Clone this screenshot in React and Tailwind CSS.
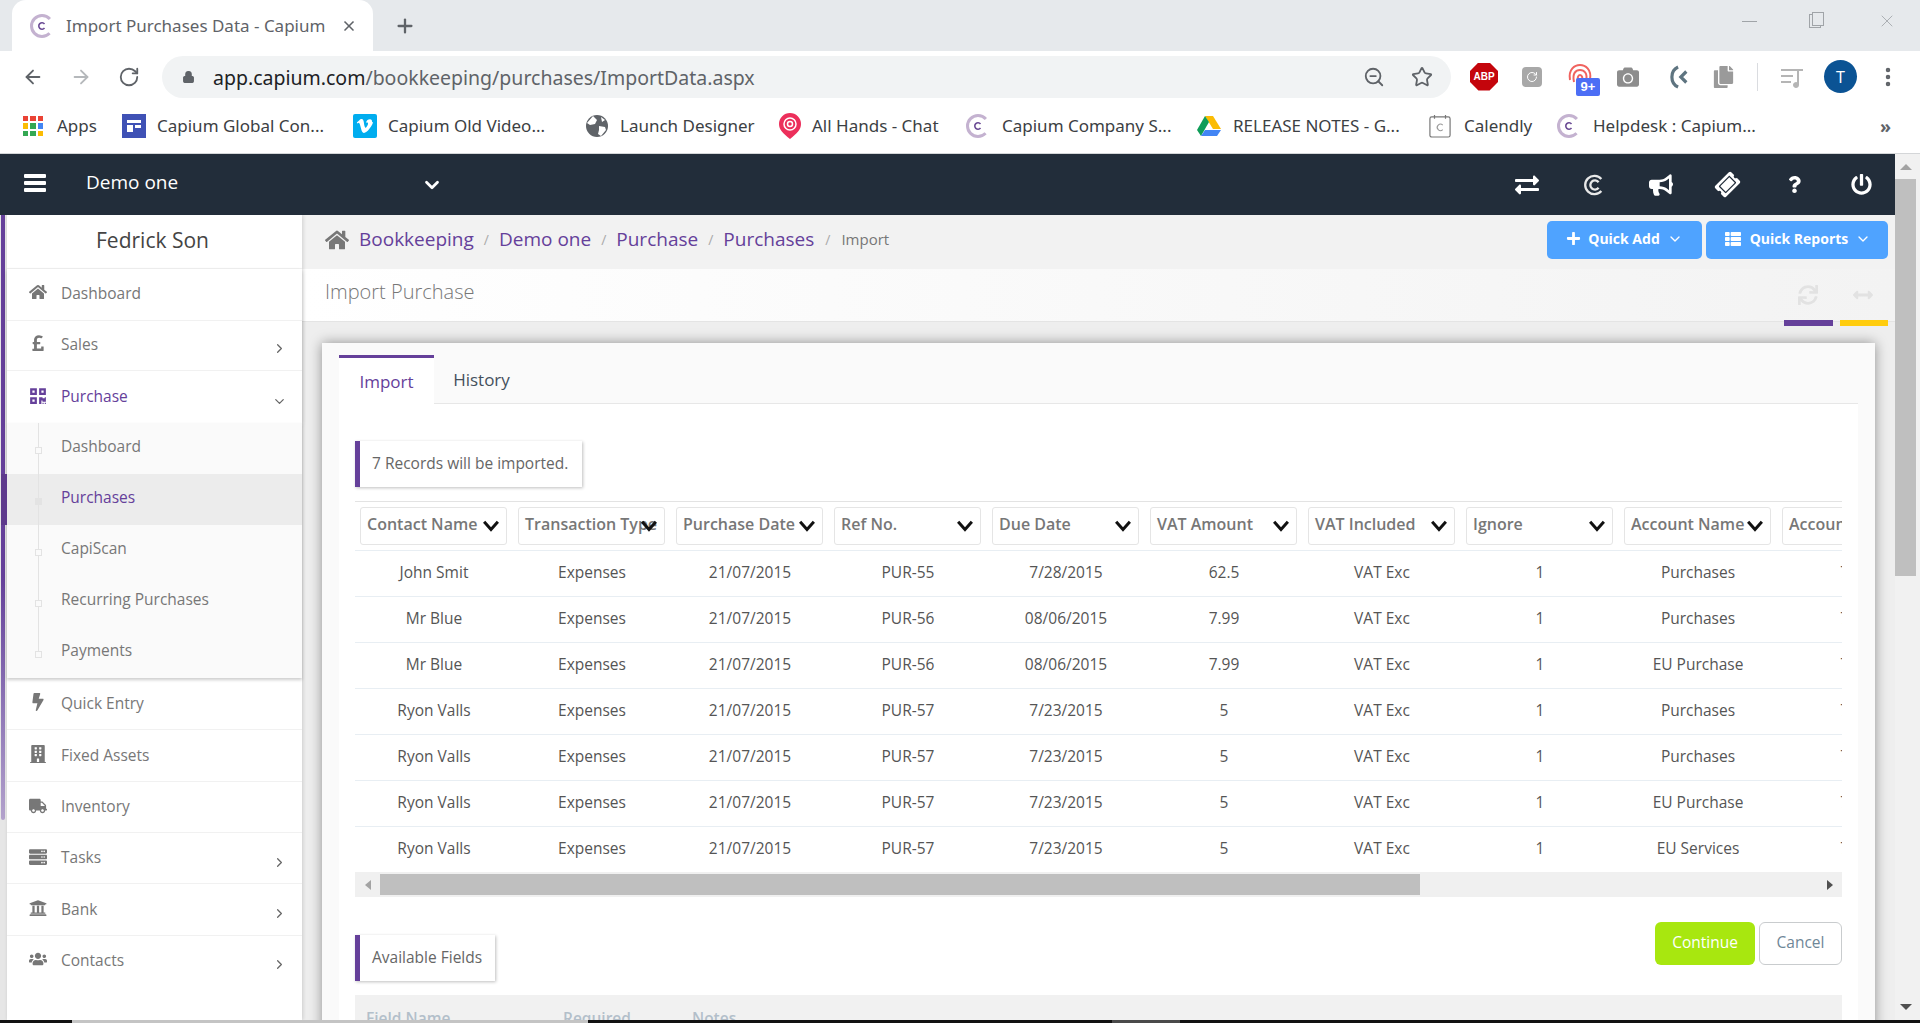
import {
  ArrowLeft,
  ArrowRight,
  RotateCw,
  Lock,
  ZoomOut,
  Star,
  MoreVertical,
  X,
  Plus,
  ChevronDown,
  ChevronRight,
} from 'lucide-react';
import {
  FaHome,
  FaPoundSign,
  FaQrcode,
  FaBolt,
  FaBuilding,
  FaTruck,
  FaServer,
  FaUniversity,
  FaUsers,
  FaExchangeAlt,
  FaBullhorn,
  FaTicketAlt,
  FaQuestion,
  FaPowerOff,
  FaPlus,
  FaThList,
  FaSync,
  FaArrowsAltH,
  FaCamera,
  FaCopy,
} from 'react-icons/fa';

const CapiumLogo = ({ className = 'w-6 h-6' }) => (
  <svg viewBox="0 0 24 24" className={className} fill="none">
    <circle cx="12" cy="12" r="10.5" stroke="#c4b2d0" strokeWidth="3" strokeDasharray="50 16" strokeDashoffset="-8" />
    <circle cx="12" cy="12" r="7.5" fill="#fff" />
    <path d="M14.5 10a3.2 3.2 0 1 0 0 4" stroke="#6a4a94" strokeWidth="1.6" />
  </svg>
);

const bookmarks = [
  { label: 'Apps', w: 'w-[99px]', icon: 'apps' },
  { label: 'Capium Global Con...', w: 'w-[231px]', icon: 'table' },
  { label: 'Capium Old Video...', w: 'w-[232px]', icon: 'vimeo' },
  { label: 'Launch Designer', w: 'w-[193px]', icon: 'globe' },
  { label: 'All Hands - Chat', w: 'w-[188px]', icon: 'chat' },
  { label: 'Capium Company S...', w: 'w-[231px]', icon: 'capium' },
  { label: 'RELEASE NOTES - G...', w: 'w-[232px]', icon: 'drive' },
  { label: 'Calendly', w: 'w-[128px]', icon: 'calendly' },
  { label: 'Helpdesk : Capium...', w: 'w-[300px]', icon: 'capium' },
];

const BookmarkIcon = ({ type }) => {
  if (type === 'apps') {
    const colors = ['#ea4335', '#ea4335', '#ea4335', '#fbbc04', '#34a853', '#4285f4', '#34a853', '#34a853', '#fbbc04'];
    return (
      <div className="grid grid-cols-3 gap-[2px] w-[20px] h-[20px] mr-[14px] shrink-0">
        {colors.map((c, i) => (
          <span key={i} style={{ backgroundColor: c }} />
        ))}
      </div>
    );
  }
  if (type === 'table') {
    return (
      <svg viewBox="0 0 24 24" className="w-6 h-6 mr-[11px] shrink-0">
        <rect width="24" height="24" fill="#3f51b5" />
        <path d="M5 6h14v3H5zM5 11h6v7H5zM13 11h6v3h-6z" fill="#fff" />
      </svg>
    );
  }
  if (type === 'vimeo') {
    return (
      <svg viewBox="0 0 24 24" className="w-6 h-6 mr-[11px] shrink-0">
        <rect width="24" height="24" rx="2" fill="#00adef" />
        <path d="M20 8c-.1 1.6-1.2 3.800-3.400 6.600C14.400 17.500 12.500 19 11 19c-1 0-1.800-.9-2.500-2.700L7.200 11.400C6.700 9.600 6.200 8.700 5.700 8.700c-.1 0-.5.200-1.200.7L3.800 8.500c.8-.7 1.500-1.400 2.300-2 1-.9 1.800-1.400 2.300-1.400 1.200-.1 2 .7 2.300 2.500.3 2 .5 3.200.6 3.700.4 1.600.8 2.400 1.200 2.400.3 0 .8-.5 1.500-1.500.6-1 1-1.800 1-2.300.1-.9-.3-1.300-1-1.300-.4 0-.7.100-1.100.2.700-2.400 2.100-3.500 4.100-3.500 1.500.1 2.200 1 2.100 3z" fill="#fff" />
      </svg>
    );
  }
  if (type === 'globe') {
    return (
      <svg viewBox="0 0 24 24" className="w-6 h-6 mr-[11px] shrink-0">
        <circle cx="12" cy="12" r="11" fill="#5f6368" />
        <path d="M8 2l4 4-2 4-5 1-3-2zM14 12l6 1 1 3-5 6-3-2 1-4zM16 3l4 3-3 2z" fill="#fff" />
      </svg>
    );
  }
  if (type === 'chat') {
    return (
      <svg viewBox="0 0 24 28" className="w-6 h-7 mr-[10px] shrink-0">
        <path d="M12 1a11 11 0 0 1 11 11c0 6-4 9-11 15C5 21 1 18 1 12A11 11 0 0 1 12 1z" fill="#ec2f5b" />
        <circle cx="12" cy="12" r="6" fill="none" stroke="#fff" strokeWidth="1.500" />
        <circle cx="12" cy="12" r="2.500" fill="none" stroke="#fff" strokeWidth="1.500" />
      </svg>
    );
  }
  if (type === 'drive') {
    return (
      <svg viewBox="0 0 24 22" className="w-6 h-[22px] mr-[12px] shrink-0">
        <path d="M8 1h8l8 13h-8z" fill="#fbbc04" />
        <path d="M8 1L0 15l4 6 8-14z" fill="#0f9d58" />
        <path d="M8 15h16l-4 6H4z" fill="#4285f4" />
      </svg>
    );
  }
  if (type === 'calendly') {
    return (
      <svg viewBox="0 0 24 26" className="w-[22px] h-[26px] mr-[13px] shrink-0" fill="none">
        <rect x="1" y="3" width="22" height="22" rx="2" stroke="#777" strokeWidth="1.300" />
        <path d="M6 1v4M18 1v4" stroke="#777" strokeWidth="1.300" />
        <path d="M15 12a3.500 3.500 0 1 0 0 5" stroke="#999" strokeWidth="1.200" />
      </svg>
    );
  }
  return <CapiumLogo className="w-6 h-6 mr-[12px] shrink-0" />;
};

const ChromeBar = () => (
  <div className="shrink-0 bg-white">
    <div className="h-[51px] bg-[#e6e9ec] flex items-stretch pl-3 text-[#5f6368]">
      <div className="w-[361px] bg-white rounded-t-[14px] flex items-center pl-[18px] pr-4">
        <CapiumLogo />
        <span className="ml-3 text-[17px] font-['Noto_Sans',sans-serif] text-[#5f6368] whitespace-nowrap">
          Import Purchases Data - Capium
        </span>
        <X className="w-4 h-4 ml-auto text-[#5f6368]" strokeWidth={2.500} />
      </div>
      <div className="flex items-center ml-[21px]">
        <Plus className="w-[22px] h-[22px]" strokeWidth={2.500} />
      </div>
      <div className="ml-auto flex items-start text-[#a0a4a8]">
        <div className="w-[64px] h-[42px] flex items-center">
          <span className="w-[15px] h-px bg-[#a0a4a8]" />
        </div>
        <div className="w-[68px] h-[42px] flex items-center">
          <span className="relative w-[12px] h-[14px] border border-[#a0a4a8] ml-[3px]">
            <span className="absolute -top-[3px] left-[2px] w-[12px] h-[14px] border border-[#a0a4a8] bg-[#e6e9ec]" />
          </span>
        </div>
        <div className="w-[46px] h-[42px] pl-[3px] flex items-center">
          <X className="w-5 h-5" strokeWidth={1} />
        </div>
      </div>
    </div>
    <div className="h-[51px] flex items-center text-[#5f6368]">
      <ArrowLeft className="w-[22px] h-[22px] ml-[22px]" />
      <ArrowRight className="w-[22px] h-[22px] ml-[26px] text-[#b5b8bb]" />
      <RotateCw className="w-[22px] h-[22px] ml-[26px]" />
      <div className="ml-[22px] w-[1289px] h-[42px] rounded-full bg-[#f1f3f4] flex items-center pl-[20px] pr-[18px]">
        <Lock className="w-[13px] h-[16px]" fill="#5f6368" />
        <span className="ml-[18px] pt-[2px] text-[19.500px] font-['Noto_Sans',sans-serif] whitespace-nowrap text-[#5f6368]">
          <span className="text-[#202124]">app.capium.com</span>/bookkeeping/purchases/ImportData.aspx
        </span>
        <ZoomOut className="w-[22px] h-[22px] ml-auto" />
        <Star className="w-[22px] h-[22px] ml-[26px]" />
      </div>
      <div className="ml-[19px] w-[28px] h-[28px] flex items-center justify-center bg-[#c4050c] text-white text-[10px] font-bold font-['Liberation_Sans',sans-serif] [clip-path:polygon(30%_0,70%_0,100%_30%,100%_70%,70%_100%,30%_100%,0_70%,0_30%)]">
        ABP
      </div>
      <div className="ml-[24px] w-[20px] h-[20px] rounded-[4px] bg-[#a8a8a8] flex items-center justify-center">
        <RotateCw className="w-3 h-3 text-white" />
      </div>
      <div className="relative ml-[25px] w-[26px] h-[28px]">
        <svg viewBox="0 0 26 28" className="w-[26px] h-[28px]" fill="none" stroke="#f0635f" strokeWidth="2">
          <path d="M3 17C1 6 8 2 13 2s12 4 10 15" />
          <path d="M7 19C5 10 9 7 13 7s8 3 6 11" />
          <path d="M11 20c-1-5 0-8 2-8s3 3 2 6" />
        </svg>
        <span className="absolute left-[9px] top-[15px] w-[24px] h-[18px] rounded-[2px] bg-[#4c6ef5] text-white text-[13px] leading-[18px] font-bold text-center font-['Liberation_Sans',sans-serif]">
          9+
        </span>
      </div>
      <FaCamera className="ml-[24px] w-[22px] h-[22px] text-[#8d8d8d]" />
      <svg viewBox="0 0 24 28" className="ml-[29px] w-[22px] h-[26px]" fill="none" stroke="#5e7480" strokeWidth="3.500">
        <path d="M11 3C2 7 2 21 11 25" />
        <path d="M20 8l-6 6 6 6" />
      </svg>
      <FaCopy className="ml-[23px] w-[21px] h-[22px] text-[#9a9a9a]" />
      <span className="ml-[23px] w-px h-[28px] bg-[#dadce0]" />
      <svg viewBox="0 0 24 24" className="ml-[22px] w-[24px] h-[24px]" fill="#b5b5b5">
        <path d="M1 4h16v2H1zM1 10h12v2H1zM1 16h10v2H1zM17 4h6v2h-4v14a3 3 0 1 1-2-2.800z" />
      </svg>
      <div className="ml-[20px] w-[33px] h-[33px] rounded-full bg-[#0b5394] flex items-center justify-center text-white text-[16px] font-['Noto_Sans',sans-serif]">
        T
      </div>
      <MoreVertical className="ml-[19px] w-[24px] h-[24px] text-[#5f6368]" strokeWidth={2.500} />
    </div>
    <div className="h-[51px] flex items-center pl-[23px] pb-[3px] text-[#3c4043] text-[17px] font-['Noto_Sans',sans-serif]">
      {bookmarks.map((b, i) => (
        <div key={i} className={`${b.w} flex items-center shrink-0 whitespace-nowrap`}>
          <BookmarkIcon type={b.icon} />
          <span>{b.label}</span>
        </div>
      ))}
      <span className="ml-[23px] text-[18px] font-bold text-[#5f6368]">»</span>
    </div>
    <div className="h-px bg-[#d4d6d8]" />
  </div>
);

const sideItems = [
  { label: 'Dashboard', Icon: FaHome, h: 'h-[52px]', pb: 'pb-[2px]' },
  { label: 'Sales', Icon: FaPoundSign, arrow: true, h: 'h-[50px]', pb: 'pb-[2px]' },
  { label: 'Purchase', Icon: FaQrcode, open: true, h: 'h-[52px]', pb: 'pb-0' },
];

const sideItemsBottom = [
  { label: 'Quick Entry', Icon: FaBolt, h: 'h-[52px]', pb: 'pb-0' },
  { label: 'Fixed Assets', Icon: FaBuilding, h: 'h-[52px]', pb: 'pb-0' },
  { label: 'Inventory', Icon: FaTruck, h: 'h-[51px]', pb: 'pb-0' },
  { label: 'Tasks', Icon: FaServer, arrow: true, h: 'h-[51px]', pb: 'pb-0' },
  { label: 'Bank', Icon: FaUniversity, arrow: true, h: 'h-[52px]', pb: 'pb-0' },
  { label: 'Contacts', Icon: FaUsers, arrow: true, h: 'h-[51px]', pb: 'pb-[2px]' },
];

const subItems = ['Dashboard', 'Purchases', 'CapiScan', 'Recurring Purchases', 'Payments'];

const SideRow = ({ item }) => (
  <div className={`${item.h} ${item.pb} flex items-center border-b border-[#f1f1f1] last:border-b-0 pl-[14px] pr-[15px] ${item.open ? 'text-[#65409a]' : 'text-[#777]'}`}>
    <span className="w-[33px] flex justify-center pb-[3px]">
      <item.Icon className="w-[18px] h-[18px]" />
    </span>
    <span className="ml-[7px]">{item.label}</span>
    {item.arrow && <ChevronRight className="ml-auto mt-[8px] w-[15px] h-[15px] text-[#666]" />}
    {item.open && <ChevronDown className="ml-auto mt-[8px] w-[15px] h-[15px] text-[#666]" />}
  </div>
);

const Sidebar = () => (
  <div className="flex w-[302px] shrink-0 font-['Open_Sans',sans-serif] text-[15.500px] z-10">
    <div className="w-[7px] bg-[#e6e6e6] pl-px shrink-0">
      <div className="w-[4px] h-[605px] rounded-b-[3px] bg-gradient-to-b from-[#65409a] via-[#65409a] via-[60%] to-[#b3a2cc]" />
    </div>
    <div className="w-[295px] bg-white shadow-[1px_0_4px_rgba(0,0,0,0.15)]">
      <div className="h-[54px] flex items-center justify-center pr-[4px] pb-[2px] text-[21px] text-[#444] border-b border-[#f1f1f1]">
        Fedrick Son
      </div>
      <div className="relative shadow-[0_2px_4px_rgba(0,0,0,0.18)]">
        {sideItems.map((item) => (
          <SideRow key={item.label} item={item} />
        ))}
      </div>
      <div className="h-[255px] bg-[#fafafa] shadow-[0_2px_3px_rgba(0,0,0,0.2)] relative">
        {subItems.map((label) => {
          const active = label === 'Purchases';
          return (
            <div
              key={label}
              className={`relative h-[51px] flex items-center pl-[54px] pb-[3px] ${active ? 'bg-[#ececec] text-[#65409a]' : 'text-[#777]'}`}
            >
              {active && <span className="absolute -left-[6px] top-0 w-[6px] h-full bg-[#5e3a8c]" />}
              <span className={`absolute left-[31px] top-0 w-px bg-[#e3e3e3] ${label === 'Payments' ? 'h-[27px]' : 'h-full'}`} />
              <span className={`absolute left-[28px] top-[24px] w-[7px] h-[7px] border border-[#e3e3e3] ${active ? 'bg-[#e3e3e3]' : 'bg-[#fafafa]'}`} />
              {label}
            </div>
          );
        })}
      </div>
      {sideItemsBottom.map((item) => (
        <SideRow key={item.label} item={item} />
      ))}
    </div>
  </div>
);

const columns = [
  'Contact Name',
  'Transaction Type',
  'Purchase Date',
  'Ref No.',
  'Due Date',
  'VAT Amount',
  'VAT Included',
  'Ignore',
  'Account Name',
  'Account Code',
];

const rows = [
  ['John Smit', 'Expenses', '21/07/2015', 'PUR-55', '7/28/2015', '62.5', 'VAT Exc', '1', 'Purchases', '7000'],
  ['Mr Blue', 'Expenses', '21/07/2015', 'PUR-56', '08/06/2015', '7.99', 'VAT Exc', '1', 'Purchases', '7000'],
  ['Mr Blue', 'Expenses', '21/07/2015', 'PUR-56', '08/06/2015', '7.99', 'VAT Exc', '1', 'EU Purchase', '7000'],
  ['Ryon Valls', 'Expenses', '21/07/2015', 'PUR-57', '7/23/2015', '5', 'VAT Exc', '1', 'Purchases', '7000'],
  ['Ryon Valls', 'Expenses', '21/07/2015', 'PUR-57', '7/23/2015', '5', 'VAT Exc', '1', 'Purchases', '7000'],
  ['Ryon Valls', 'Expenses', '21/07/2015', 'PUR-57', '7/23/2015', '5', 'VAT Exc', '1', 'EU Purchase', '7000'],
  ['Ryon Valls', 'Expenses', '21/07/2015', 'PUR-57', '7/23/2015', '5', 'VAT Exc', '1', 'EU Services', '7000'],
];

const NoteBox = ({ children, w }) => (
  <div className={`${w} h-[46px] border-l-[5px] border-[#65409a] bg-white flex items-center pl-[12px] text-[15.500px] text-[#666] shadow-[1px_1px_3px_rgba(0,0,0,0.25)]`}>
    {children}
  </div>
);

const ImportCard = () => (
  <div className="mx-[20px] mt-[21px] bg-[#fafafa] px-[17px] shadow-[0_0_12px_rgba(0,0,0,0.4)] h-[700px]">
    <div className="h-[61px] pt-[12px] flex items-stretch border-b border-[#e7e7e7] text-[17px]">
      <div className="w-[95px] h-[50px] border-t-[3px] border-[#65409a] bg-white text-[#65409a] flex items-center justify-center">
        Import
      </div>
      <div className="w-[95px] h-[50px] flex items-center justify-center text-[#44505c]">History</div>
    </div>
    <div className="bg-white px-[16px] h-[640px]">
      <div className="pt-[37px]">
        <NoteBox w="w-[227px]">7 Records will be imported.</NoteBox>
      </div>
      <div className="mt-[14px] border-t border-[#e3e3e3] overflow-hidden">
        <div className="flex h-[49px] pl-[5px] pt-[5px] border-b border-[#e8eef3]">
          {columns.map((c) => (
            <div key={c} className="relative w-[147px] h-[38px] mr-[11px] shrink-0 border border-[#e5e5e5] rounded-[3px] flex items-center pl-[6px] pb-[4px] text-[16px] font-semibold text-[#777] whitespace-nowrap">
              {c}
              <svg viewBox="0 0 20 14" className="absolute right-[6px] top-[12px] w-[18px] h-[12px]" fill="none" stroke="#111" strokeWidth="3.500">
                <path d="M2 2l8 9 8-9" />
              </svg>
            </div>
          ))}
        </div>
        {rows.map((row, i) => (
          <div key={i} className="flex h-[46px] last:h-[45px] pb-[1px] items-center border-b border-[#e8eef3] last:border-b-0 text-[15.500px] text-[#555]">
            {row.map((cell, j) => (
              <div key={j} className={`${j === 9 ? 'w-[162px]' : 'w-[158px]'} shrink-0 text-center whitespace-nowrap`}>
                {cell}
              </div>
            ))}
          </div>
        ))}
      </div>
      <div className="h-[25px] bg-[#f0f0f0] flex items-center">
        <span className="w-[25px] flex justify-center">
          <span className="w-0 h-0 border-y-[5px] border-y-transparent border-r-[6px] border-r-[#a3a3a3]" />
        </span>
        <div className="w-[1040px] h-[21px] bg-[#bfbfbf]" />
        <span className="ml-auto w-[25px] flex justify-center">
          <span className="w-0 h-0 border-y-[5px] border-y-transparent border-l-[6px] border-l-[#505050]" />
        </span>
      </div>
      <div className="flex justify-between items-start h-[98px]">
        <div className="mt-[38px]">
          <NoteBox w="w-[140px]">Available Fields</NoteBox>
        </div>
        <div className="mt-[25px] flex gap-1 text-[15.500px]">
          <button className="w-[100px] h-[43px] rounded-[6px] bg-[#a8e70f] text-white pb-[2px]">Continue</button>
          <button className="w-[83px] h-[43px] rounded-[6px] bg-white border border-[#c9ccce] text-[#6f8798] pb-[2px]">Cancel</button>
        </div>
      </div>
      <div className="h-[60px] bg-[#f1f1f1] flex pl-[11px] text-[15.500px] font-semibold text-[#b3bfca] pt-[12px]">
        <span className="w-[197px]">Field Name</span>
        <span className="w-[129px]">Required</span>
        <span>Notes</span>
      </div>
    </div>
  </div>
);

const Content = () => (
  <div className="flex-1 min-w-0 bg-[#eeeeee] font-['Open_Sans',sans-serif] overflow-hidden">
    <div className="h-[54px] bg-[#f2f2f2] flex items-center pl-[23px] pr-[7px] pb-[4px] shadow-[0_2px_4px_rgba(0,0,0,0.12)] relative">
      <FaHome className="w-[24px] h-[22px] text-[#777]" />
      <div className="ml-[10px] mb-[2px] flex items-center text-[19px] text-[#65409a] whitespace-nowrap">
        <span>Bookkeeping</span>
        <span className="mx-[10px] text-[14px] text-[#aaa]">/</span>
        <span>Demo one</span>
        <span className="mx-[10px] text-[14px] text-[#aaa]">/</span>
        <span>Purchase</span>
        <span className="mx-[10px] text-[14px] text-[#aaa]">/</span>
        <span>Purchases</span>
        <span className="mx-[11px] text-[14px] text-[#aaa]">/</span>
        <span className="text-[15px] text-[#777]">Import</span>
      </div>
      <div className="ml-auto flex gap-1 text-[14px] font-bold text-white">
        <button className="w-[155px] h-[38px] pb-[3px] rounded-[5px] bg-[#4fa3ff] flex items-center justify-center">
          <FaPlus className="w-[15px] h-[15px]" />
          <span className="ml-[7px]">Quick Add</span>
          <ChevronDown className="ml-[7px] w-4 h-4" />
        </button>
        <button className="w-[182px] h-[38px] pb-[3px] rounded-[5px] bg-[#4fa3ff] flex items-center justify-center">
          <FaThList className="w-[20px] h-[16px]" />
          <span className="ml-[7px]">Quick Reports</span>
          <ChevronDown className="ml-[7px] w-4 h-4" />
        </button>
      </div>
    </div>
    <div className="h-[53px] bg-gradient-to-r from-white to-[#f3f3f3] border-b border-[#e4e4e4] flex items-center pl-[23px] relative">
      <span className="text-[20px] font-light text-[#777] mb-[6px]">Import Purchase</span>
      <FaSync className="ml-auto w-[20px] h-[20px] text-[#e2e2e2]" />
      <FaArrowsAltH className="ml-[33px] mr-[20px] w-[24px] h-[20px] text-[#e2e2e2]" />
      <span className="absolute right-[62px] -bottom-[5px] w-[49px] h-[6px] bg-[#65409a]" />
      <span className="absolute right-[7px] -bottom-[5px] w-[48px] h-[6px] bg-[#ffcc0d]" />
    </div>
    <ImportCard />
  </div>
);

const navIcons = [
  { Icon: FaExchangeAlt, cls: 'w-[24px] h-[24px]' },
  null,
  { Icon: FaBullhorn, cls: 'w-[24px] h-[24px]' },
  { Icon: FaTicketAlt, cls: 'w-[23px] h-[23px] -rotate-45' },
  { Icon: FaQuestion, cls: 'w-[15px] h-[17px]' },
  { Icon: FaPowerOff, cls: 'w-[21px] h-[21px]' },
];

const TopNav = () => (
  <div className="h-[61px] bg-[#222d3a] flex items-center text-white font-['Open_Sans',sans-serif] shrink-0">
    <div className="ml-[24px] mb-[3px] w-[22px] flex flex-col gap-[3px]">
      <span className="h-[4px] bg-white rounded-[1px]" />
      <span className="h-[4px] bg-white rounded-[1px]" />
      <span className="h-[4px] bg-white rounded-[1px]" />
    </div>
    <span className="ml-[40px] mb-[4px] text-[19px]">Demo one</span>
    <ChevronDown className="ml-[243px] w-[22px] h-[22px]" strokeWidth={3} />
    <div className="ml-auto flex items-center">
      {navIcons.map((item, i) => (
        <span key={i} className="w-[67px] flex justify-center">
          {item ? (
            <item.Icon className={item.cls} />
          ) : (
            <svg viewBox="0 0 24 24" className="w-[22px] h-[22px]" fill="none" stroke="#e8e8e8" strokeWidth="2.500">
              <path d="M20 5.500a10 10 0 1 0 0 13" />
              <path d="M17 9a5 5 0 1 0 0 6" />
            </svg>
          )}
        </span>
      ))}
    </div>
  </div>
);

const PageScrollbar = () => (
  <div className="w-[25px] bg-[#f1f1f1] flex flex-col items-start shrink-0">
    <div className="h-[25px] w-[21px] flex items-center justify-center">
      <span className="w-0 h-0 border-x-[6px] border-x-transparent border-b-[6px] border-b-[#a3a3a3]" />
    </div>
    <div className="w-[21px] h-[397px] bg-[#bfbfbf]" />
    <div className="flex-1" />
    <div className="h-[26px] w-[21px] flex items-center justify-center">
      <span className="w-0 h-0 border-x-[6px] border-x-transparent border-t-[6px] border-t-[#505050]" />
    </div>
  </div>
);

const App = () => (
  <div className="w-[1920px] h-[1023px] flex flex-col overflow-hidden bg-white">
    <ChromeBar />
    <div className="flex-1 min-h-0 flex">
      <div className="flex-1 min-w-0 flex flex-col">
        <TopNav />
        <div className="flex-1 min-h-0 flex overflow-hidden">
          <Sidebar />
          <Content />
        </div>
      </div>
      <PageScrollbar />
    </div>
    <div className="h-[3px] shrink-0 flex bg-[#111]">
      <span className="w-[72px]" />
      <span className="w-[516px] bg-[#c4c4c4]" />
      <span className="w-[524px]" />
      <span className="w-[68px] bg-[#4a4a4a]" />
    </div>
  </div>
);

export default App;
